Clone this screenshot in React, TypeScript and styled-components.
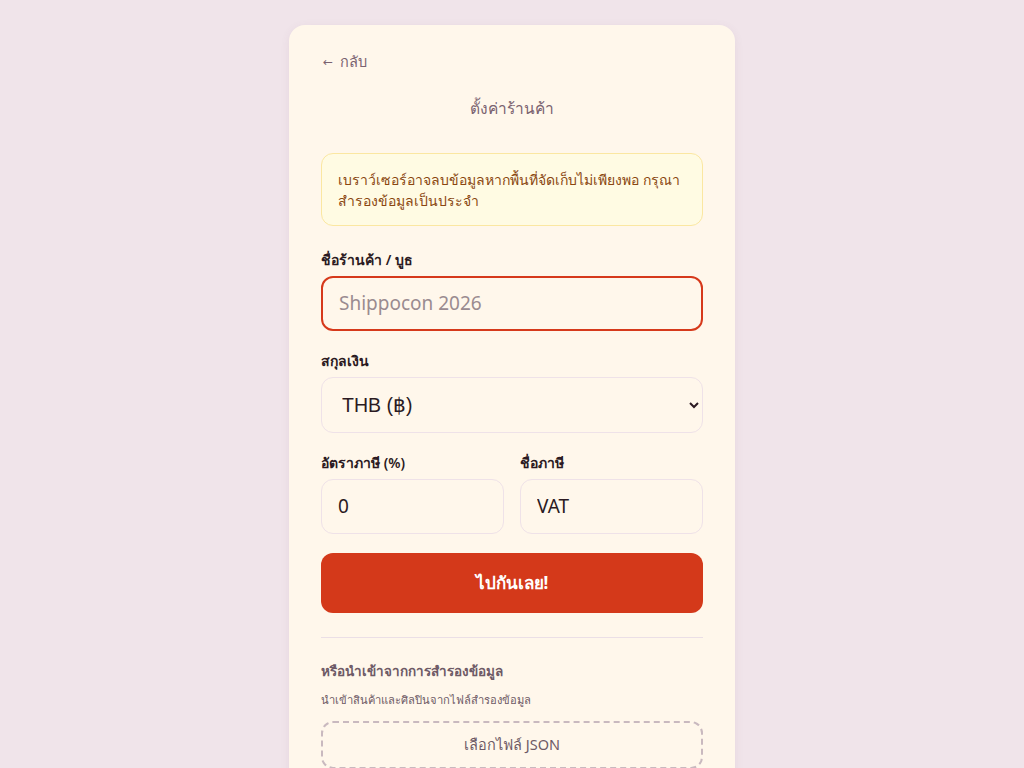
import React from "react";
import styled, { createGlobalStyle } from "styled-components";

const GlobalStyle = createGlobalStyle`
  body {
    margin: 0;
    background: #f0e4ea;
    font-family: "Noto Sans", "DejaVu Sans", sans-serif;
  }
  * { box-sizing: border-box; }
`;

const Page = styled.div`
  min-height: 100vh;
  display: flex;
  justify-content: center;
  padding-top: 25px;
`;

const Card = styled.div`
  width: 446px;
  background: #fff7eb;
  border-radius: 16px;
  padding: 24px 32px 32px;
  box-shadow: 0 2px 10px rgba(120, 80, 100, 0.08);
`;

const BackLink = styled.a`
  display: inline-flex;
  align-items: center;
  gap: 7px;
  font-size: 14.5px;
  color: #7a6270;
  text-decoration: none;
  height: 22px;
`;

const Arrow = styled.span`
  font-size: 12px;
  padding-left: 2px;
`;

const Title = styled.h1`
  margin: 22px 0 0;
  text-align: center;
  font-size: 15.5px;
  font-weight: 400;
  color: #7a6270;
  line-height: 26px;
`;

const Notice = styled.div`
  margin-top: 32px;
  padding: 15px 16px 14px;
  background: #fffbe3;
  border: 1px solid #fbe7a1;
  border-radius: 12px;
  color: #8a4710;
  font-size: 14px;
  line-height: 21px;
`;

const Field = styled.div<{ $first?: boolean }>`
  margin-top: ${(p) => (p.$first ? "24px" : "20px")};
  display: flex;
  flex-direction: column;
  gap: 6px;
  min-width: 0;
`;

const Label = styled.label`
  font-size: 14px;
  font-weight: 600;
  color: #2b1a22;
  line-height: 20px;
`;

const TextInput = styled.input<{ $focused?: boolean }>`
  width: 100%;
  height: 55px;
  padding: 0 16px;
  border-radius: 12px;
  border: ${(p) => (p.$focused ? "2px solid #d6391b" : "1px solid #efe2e8")};
  background: #fff7eb;
  font-family: inherit;
  font-size: 19px;
  color: #2b1a22;
  outline: none;
  &::placeholder {
    color: #9a8b90;
  }
`;

const Select = styled.select`
  width: 100%;
  height: 56px;
  padding: 0 14px 0 16px;
  border-radius: 12px;
  border: 1px solid #efe2e8;
  background: #fff7eb;
  font-family: "Liberation Sans", Arial, sans-serif;
  font-size: 19.5px;
  color: #2b1a22;
  outline: none;
`;

const Row = styled.div`
  display: grid;
  grid-template-columns: 1fr 1fr;
  gap: 16px;
`;

const PrimaryButton = styled.button`
  margin-top: 19px;
  width: 100%;
  height: 60px;
  border: none;
  border-radius: 12px;
  background: #d4391a;
  color: #fff;
  font-family: inherit;
  font-size: 17px;
  font-weight: 700;
`;

const Divider = styled.hr`
  margin: 24px 0 0;
  border: none;
  border-top: 1px solid #ebdfe6;
`;

const SectionTitle = styled.div`
  margin-top: 22px;
  font-size: 13.5px;
  font-weight: 600;
  color: #6e5a66;
  line-height: 22px;
`;

const SectionHint = styled.div`
  margin-top: 9px;
  font-size: 11.2px;
  color: #6e5a66;
  line-height: 18px;
`;

const FileDrop = styled.button`
  margin-top: 12px;
  width: 100%;
  height: 48px;
  border: 2px dashed #c9b9bf;
  border-radius: 12px;
  background: transparent;
  font-family: inherit;
  font-size: 14.5px;
  color: #6e5a66;
`;

export default function App() {
  return (
    <>
      <GlobalStyle />
      <Page>
        <Card>
          <BackLink href="#">
            <Arrow>←</Arrow> กลับ
          </BackLink>
          <Title>ตั้งค่าร้านค้า</Title>
          <Notice>
            เบราว์เซอร์อาจลบข้อมูลหากพื้นที่จัดเก็บไม่เพียงพอ กรุณาสำรองข้อมูลเป็นประจำ
          </Notice>
          <Field $first>
            <Label>ชื่อร้านค้า / บูธ</Label>
            <TextInput $focused placeholder="Shippocon 2026" />
          </Field>
          <Field>
            <Label>สกุลเงิน</Label>
            <Select defaultValue="THB">
              <option value="THB">THB (฿)</option>
            </Select>
          </Field>
          <Row>
            <Field>
              <Label>อัตราภาษี (%)</Label>
              <TextInput defaultValue="0" />
            </Field>
            <Field>
              <Label>ชื่อภาษี</Label>
              <TextInput defaultValue="VAT" />
            </Field>
          </Row>
          <PrimaryButton>ไปกันเลย!</PrimaryButton>
          <Divider />
          <SectionTitle>หรือนำเข้าจากการสำรองข้อมูล</SectionTitle>
          <SectionHint>นำเข้าสินค้าและศิลปินจากไฟล์สำรองข้อมูล</SectionHint>
          <FileDrop>เลือกไฟล์ JSON</FileDrop>
        </Card>
      </Page>
    </>
  );
}
